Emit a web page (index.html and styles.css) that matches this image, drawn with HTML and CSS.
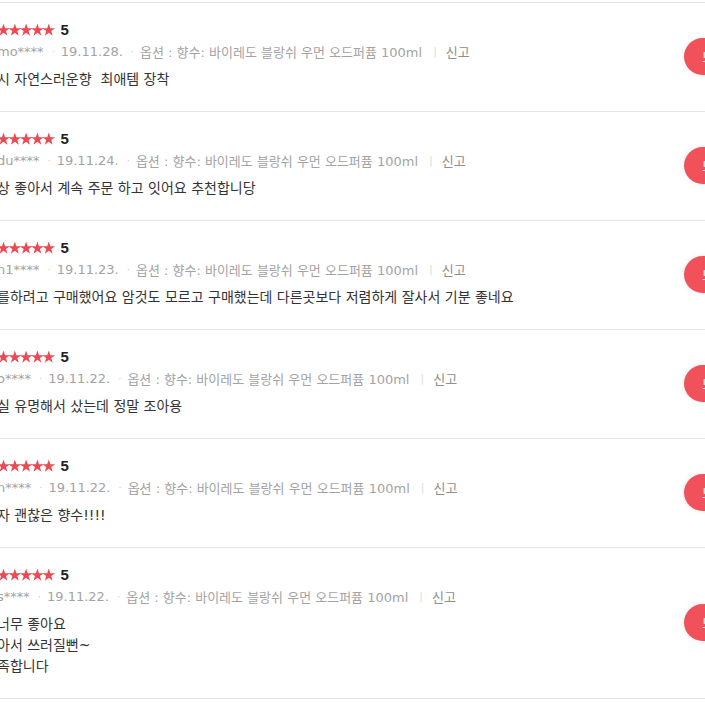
FILE: index.html
```html
<!DOCTYPE html>
<html lang="ko">
<head>
<meta charset="utf-8">
<title>리뷰</title>
<link rel="stylesheet" href="styles.css">
</head>
<body>
<ul class="review-list">
  <li class="review">
    <div class="review-main">
      <div class="rating"><span class="stars"><i class="star"></i><i class="star"></i><i class="star"></i><i class="star"></i><i class="star"></i></span><span class="score">5</span></div>
      <div class="meta"><span class="user">mo****</span><span class="dot">·</span><span class="date">19.11.28.</span><span class="dot">·</span><span class="option">옵션 : 향수: 바이레도 블랑쉬 우먼 오드퍼퓸 100ml</span><span class="bar">|</span><a class="report">신고</a></div>
      <p class="text">시 자연스러운향&nbsp; 최애템 장착</p>
    </div>
    <button class="like">도움</button>
  </li>
  <li class="review">
    <div class="review-main">
      <div class="rating"><span class="stars"><i class="star"></i><i class="star"></i><i class="star"></i><i class="star"></i><i class="star"></i></span><span class="score">5</span></div>
      <div class="meta"><span class="user">du****</span><span class="dot">·</span><span class="date">19.11.24.</span><span class="dot">·</span><span class="option">옵션 : 향수: 바이레도 블랑쉬 우먼 오드퍼퓸 100ml</span><span class="bar">|</span><a class="report">신고</a></div>
      <p class="text">상 좋아서 계속 주문 하고 잇어요 추천합니당</p>
    </div>
    <button class="like">도움</button>
  </li>
  <li class="review">
    <div class="review-main">
      <div class="rating"><span class="stars"><i class="star"></i><i class="star"></i><i class="star"></i><i class="star"></i><i class="star"></i></span><span class="score">5</span></div>
      <div class="meta"><span class="user">n1****</span><span class="dot">·</span><span class="date">19.11.23.</span><span class="dot">·</span><span class="option">옵션 : 향수: 바이레도 블랑쉬 우먼 오드퍼퓸 100ml</span><span class="bar">|</span><a class="report">신고</a></div>
      <p class="text">를하려고 구매했어요 암것도 모르고 구매했는데 다른곳보다 저렴하게 잘사서 기분 좋네요</p>
    </div>
    <button class="like">도움</button>
  </li>
  <li class="review">
    <div class="review-main">
      <div class="rating"><span class="stars"><i class="star"></i><i class="star"></i><i class="star"></i><i class="star"></i><i class="star"></i></span><span class="score">5</span></div>
      <div class="meta"><span class="user">o****</span><span class="dot">·</span><span class="date">19.11.22.</span><span class="dot">·</span><span class="option">옵션 : 향수: 바이레도 블랑쉬 우먼 오드퍼퓸 100ml</span><span class="bar">|</span><a class="report">신고</a></div>
      <p class="text">실 유명해서 샀는데 정말 조아용</p>
    </div>
    <button class="like">도움</button>
  </li>
  <li class="review">
    <div class="review-main">
      <div class="rating"><span class="stars"><i class="star"></i><i class="star"></i><i class="star"></i><i class="star"></i><i class="star"></i></span><span class="score">5</span></div>
      <div class="meta"><span class="user">n****</span><span class="dot">·</span><span class="date">19.11.22.</span><span class="dot">·</span><span class="option">옵션 : 향수: 바이레도 블랑쉬 우먼 오드퍼퓸 100ml</span><span class="bar">|</span><a class="report">신고</a></div>
      <p class="text">자 괜찮은 향수!!!!</p>
    </div>
    <button class="like">도움</button>
  </li>
  <li class="review">
    <div class="review-main">
      <div class="rating"><span class="stars"><i class="star"></i><i class="star"></i><i class="star"></i><i class="star"></i><i class="star"></i></span><span class="score">5</span></div>
      <div class="meta"><span class="user">s****</span><span class="dot">·</span><span class="date">19.11.22.</span><span class="dot">·</span><span class="option">옵션 : 향수: 바이레도 블랑쉬 우먼 오드퍼퓸 100ml</span><span class="bar">|</span><a class="report">신고</a></div>
      <p class="text">너무 좋아요<br>아서 쓰러질뻔~<br>족합니다</p>
    </div>
    <button class="like">도움</button>
  </li>
</ul>
</body>
</html>
```

FILE: styles.css
```css
html {
  overflow: hidden;
  background: #fff;
}

body {
  margin: 0;
  font-family: "DejaVu Sans", "Noto Sans CJK KR", sans-serif;
  color: #333;
}

.review-list {
  list-style: none;
  margin: 2px -39px 0 -3px;
  padding: 0;
  border-top: 1px solid #e6e6e6;
}

.review {
  display: flex;
  align-items: center;
  padding: 19px 0 21px;
  border-bottom: 1px solid #e6e6e6;
}

.review-main {
  flex: 1;
  min-width: 0;
}

.rating {
  display: flex;
  align-items: center;
  height: 16px;
}

.stars {
  display: flex;
}

.star {
  display: block;
  width: 13px;
  height: 13px;
  margin-right: -1.7px;
  background: #ec4a52;
  clip-path: polygon(50% 0%, 62% 36%, 99% 36%, 69% 58%, 80% 94%, 50% 72%, 20% 94%, 31% 58%, 1% 36%, 38% 36%);
}

.score {
  margin-left: 7px;
  font-family: "Liberation Sans", Arial, sans-serif;
  font-weight: bold;
  font-size: 15px;
  color: #222;
  line-height: 16px;
}

.meta {
  display: flex;
  align-items: center;
  margin-top: 4px;
  height: 18px;
  font-size: 13px;
  color: #a3a3a3;
  white-space: nowrap;
}

.dot {
  margin: 0 6px 0 8px;
  color: #d0d0d0;
  font-size: 10px;
}

.bar {
  margin: 0 9px 0 11px;
  color: #dcdcdc;
  font-size: 11px;
}

.report {
  color: #8e8e8e;
}

.text {
  margin: 9px 0 0;
  font-size: 14px;
  line-height: 21px;
  color: #333;
}

.like {
  flex: none;
  width: 60px;
  height: 37px;
  padding: 0 0 0 18px;
  border: 0;
  border-radius: 19px;
  background: #f0515a;
  color: #fff;
  font-family: "Noto Sans CJK KR", sans-serif;
  font-size: 12px;
  text-align: left;
  box-shadow: 0 0 6px rgba(0, 0, 0, 0.08);
}
```
